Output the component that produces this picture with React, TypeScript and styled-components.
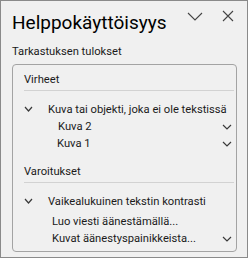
import React from "react";
import styled, { createGlobalStyle } from "styled-components";

const Global = createGlobalStyle`
  html, body { margin: 0; padding: 0; background: #ffffff; }
  * { box-sizing: border-box; }
`;

const Pane = styled.div`
  width: 248px;
  height: 258px;
  background: #f0f0f0;
  border: 1px solid #8a8a8a;
  display: flex;
  flex-direction: column;
  font-family: Roboto, "Liberation Sans", sans-serif;
  color: #1b1b1b;
  padding: 0 10px 0 11px;
`;

const Header = styled.div`
  display: flex;
  align-items: flex-start;
  height: 43px;
`;

const Title = styled.div`
  flex: 1;
  font-size: 19px;
  line-height: 24px;
  margin-top: 10px;
  color: #000;
`;

const IconBtn = styled.div<{ $w: number; $top: number; $right: number }>`
  width: ${(p) => p.$w}px;
  margin-top: ${(p) => p.$top}px;
  margin-right: ${(p) => p.$right}px;
  display: flex;
  justify-content: center;
  svg { display: block; }
`;

const Caption = styled.div`
  font-size: 11.2px;
  line-height: 16px;
  height: 20px;
`;

const Box = styled.div`
  border: 1px solid #a3a3a3;
  border-radius: 4px;
  height: 188px;
  width: 225px;
  padding: 0 2px 0 11px;
  display: flex;
  flex-direction: column;
`;

const Section = styled.div<{ $top?: number }>`
  font-size: 11.2px;
  line-height: 16px;
  padding: 7px 0 2px;
  margin-top: ${(p) => p.$top ?? 0}px;
  border-bottom: 1px solid #d2d2d2;
`;

const Row = styled.div<{ $indent: number; $top?: number }>`
  display: flex;
  align-items: center;
  height: 17px;
  font-size: 11.2px;
  margin-top: ${(p) => p.$top ?? 0}px;
  padding-left: ${(p) => p.$indent}px;
  white-space: nowrap;
`;

const Lead = styled.span`
  width: 24px;
  display: flex;
  align-items: center;
  flex-shrink: 0;
  svg { display: block; margin-top: -2px; }
`;

const Label = styled.span`
  flex: 1;
`;

const Tail = styled.span`
  width: 12px;
  display: flex;
  align-items: center;
  svg { display: block; }
`;

const Chevron = ({ w = 7, h = 4 }: { w?: number; h?: number }) => (
  <svg width={w + 2} height={h + 2} viewBox={`0 0 ${w + 2} ${h + 2}`}>
    <path d={`M1 1 L${w / 2 + 1} ${h + 1} L${w + 1} 1`} fill="none" stroke="#3a3a3a" strokeWidth="1.2" />
  </svg>
);

export default function App() {
  return (
    <>
      <Global />
      <Pane>
        <Header>
          <Title>Helppokäyttöisyys</Title>
          <IconBtn $w={16} $top={11} $right={19}>
            <svg width="16" height="9" viewBox="0 0 16 9">
              <path d="M1 1 L8 8 L15 1" fill="none" stroke="#444" strokeWidth="1.1" />
            </svg>
          </IconBtn>
          <IconBtn $w={12} $top={9} $right={3}>
            <svg width="12" height="12" viewBox="0 0 12 12">
              <path d="M1 1 L11 11 M11 1 L1 11" fill="none" stroke="#444" strokeWidth="1.1" />
            </svg>
          </IconBtn>
        </Header>
        <Caption>Tarkastuksen tulokset</Caption>
        <Box>
          <Section>Virheet</Section>
          <Row $indent={0} $top={10}>
            <Lead><Chevron /></Lead>
            <Label>Kuva tai objekti, joka ei ole tekstissä</Label>
          </Row>
          <Row $indent={34}>
            <Label>Kuva 2</Label>
            <Tail><Chevron w={8} /></Tail>
          </Row>
          <Row $indent={33}>
            <Label>Kuva 1</Label>
            <Tail><Chevron w={8} /></Tail>
          </Row>
          <Section $top={5}>Varoitukset</Section>
          <Row $indent={0} $top={10}>
            <Lead><Chevron /></Lead>
            <Label>Vaikealukuinen tekstin kontrasti</Label>
          </Row>
          <Row $indent={28} $top={3}>
            <Label>Luo viesti äänestämällä...</Label>
          </Row>
          <Row $indent={28}>
            <Label>Kuvat äänestyspainikkeista...</Label>
            <Tail><Chevron w={8} /></Tail>
          </Row>
        </Box>
      </Pane>
    </>
  );
}
